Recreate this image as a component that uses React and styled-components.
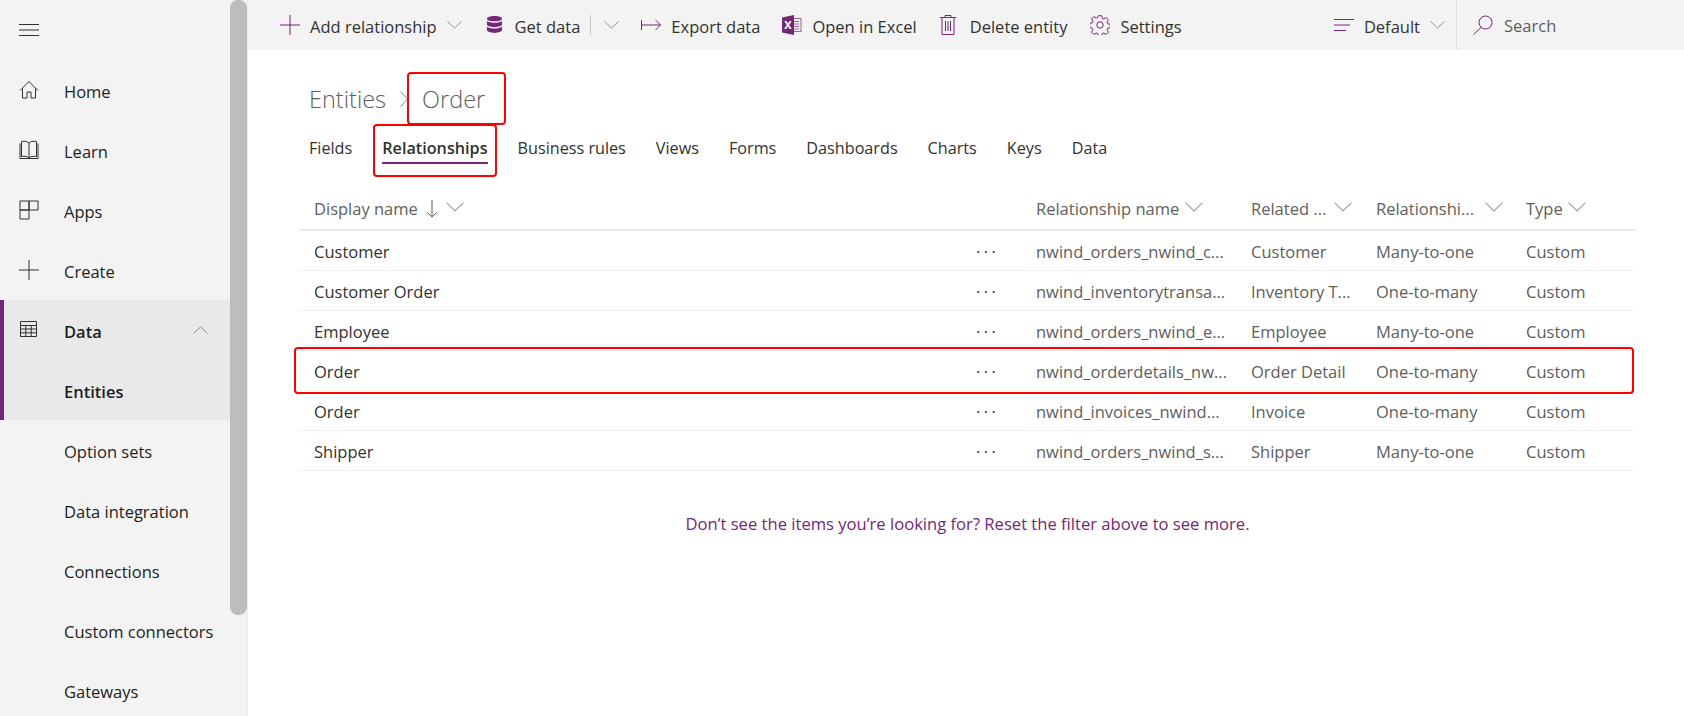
import React from "react";
import styled, { createGlobalStyle } from "styled-components";

const PURPLE = "#742774";
const FONT = `"Open Sans", "Noto Sans", "Liberation Sans", sans-serif`;

const GlobalStyle = createGlobalStyle`
  html, body {
    margin: 0;
    padding: 0;
    height: 100%;
    overflow: hidden;
    background: #fff;
    font-family: ${FONT};
  }
`;

const Chevron = ({ up }) => (
  <ChevronSvg viewBox="0 0 16 9" preserveAspectRatio="none">
    <path d={up ? "M.5 8.500 8 1l7.500 7.500" : "M.5.5 8 8 15.500.5"} />
  </ChevronSvg>
);

const navIcons = {
  home: <path d="M1 10.500 10 1.500l9 9M3.500 8.500v9.500h4.500v-6h4v6h4.500V8.500" />,
  learn: <path d="M1 3.500v15h18v-15M2.500 16.500V1.500c3.500-.6 6 0 7.500 1.600 1.500-1.600 4-2.200 7.500-1.600v15c-3.500-.6-6 0-7.500 1.600-1.500-1.600-4-2.200-7.500-1.600ZM10 3v15" />,
  apps: <path d="M1 1h9v9H1zM1 10h9v9H1zM10 1h9v9h-9z" />,
  create: <path d="M0 10h20M10 0v20" />,
  data: <path d="M1.500 1.500h16v15h-16zM1.500 5.500h16M1.500 9h16M1.500 12.800h16M6.800 5.500v11M12.200 5.500v11" />,
};

const navItems = [
  { icon: "home", label: "Home" },
  { icon: "learn", label: "Learn" },
  { icon: "apps", label: "Apps" },
  { icon: "create", label: "Create" },
  { icon: "data", label: "Data", active: true, open: true },
  { label: "Entities", active: true },
  { label: "Option sets" },
  { label: "Data integration" },
  { label: "Connections" },
  { label: "Custom connectors" },
  { label: "Gateways" },
];

const rows = [
  ["Customer", "nwind_orders_nwind_c...", "Customer", "Many-to-one", "Custom"],
  ["Customer Order", "nwind_inventorytransa...", "Inventory T...", "One-to-many", "Custom"],
  ["Employee", "nwind_orders_nwind_e...", "Employee", "Many-to-one", "Custom"],
  ["Order", "nwind_orderdetails_nw...", "Order Detail", "One-to-many", "Custom"],
  ["Order", "nwind_invoices_nwind...", "Invoice", "One-to-many", "Custom"],
  ["Shipper", "nwind_orders_nwind_s...", "Shipper", "Many-to-one", "Custom"],
];

const tabs = ["Fields", "Relationships", "Business rules", "Views", "Forms", "Dashboards", "Charts", "Keys", "Data"];

const App = () => {
  return (
    <Page>
      <GlobalStyle />
      <Sidebar>
        <Hamburger>
          <NavSvg viewBox="0 0 20 12">
            <path d="M0 .5h20M0 6h20M0 11.500h20" />
          </NavSvg>
        </Hamburger>
        {navItems.map((item) => (
          <NavItem key={item.label} $active={item.active}>
            <NavIconBox>{item.icon && <NavSvg viewBox="0 0 20 20">{navIcons[item.icon]}</NavSvg>}</NavIconBox>
            <NavLabel>{item.label}</NavLabel>
            {item.open && (
              <NavChevron>
                <Chevron up />
              </NavChevron>
            )}
          </NavItem>
        ))}
        <Scrollbar />
      </Sidebar>

      <Main>
        <Toolbar>
          <ToolButton $left={32}>
            <ToolSvg viewBox="0 0 20 20">
              <path d="M0 10h20M10 0v20" />
            </ToolSvg>
            Add relationship
            <Chevron />
          </ToolButton>
          <ToolButton $left={25}>
            <ToolSvg viewBox="0 0 16 18" $w={15} $right={3}>
              <FilledPath d="M8 0c4.400 0 8 1.200 8 2.800s-3.600 2.800-8 2.800S0 4.400 0 2.800 3.600 0 8 0ZM0 5.400c1.500 1.200 4.500 1.900 8 1.900s6.500-.7 8-1.900V9c0 1.500-3.600 2.700-8 2.700S0 10.500 0 9ZM0 11.400c1.500 1.200 4.500 1.900 8 1.900s6.500-.7 8-1.900V15c0 1.600-3.600 3-8 3s-8-1.400-8-3Z" />
            </ToolSvg>
            Get data
            <ToolDivider />
            <Chevron />
          </ToolButton>
          <ToolButton $left={22}>
            <ToolSvg viewBox="0 0 20 12">
              <path d="M.5 1v10M.5 6h19M14.500 1l5 5-5 5" />
            </ToolSvg>
            Export data
          </ToolButton>
          <ToolButton $left={22}>
            <ToolSvg viewBox="0 0 20 20">
              <path d="M11 3.500h8v13h-8M12 6.500h5M12 9h5M12 11.500h5M12 14h5" strokeOpacity="0.7" />
              <FilledPath d="M0 2.500 12 0v20L0 17.500Z" />
              <ExcelMark x="6" y="13.500" textAnchor="middle">X</ExcelMark>
            </ToolSvg>
            Open in Excel
          </ToolButton>
          <ToolButton $left={23}>
            <ToolSvg viewBox="0 0 16 20" $w={16} $right={4}>
              <path d="M0 2.500h16M5 2.500V.5h6v2M2 2.500v17h12v-17M5.500 6v10M8 6v10M10.500 6v10" />
            </ToolSvg>
            Delete entity
          </ToolButton>
          <ToolButton $left={23}>
            <ToolSvg viewBox="0 0 20 20">
              <path d="M8.300 .7h3.400l.5 2.600 1.600.7 2.300-1.500 2.400 2.400-1.500 2.300.7 1.600 2.600.5v3.400l-2.600.5-.7 1.600 1.500 2.300-2.400 2.400-2.300-1.500-1.600.7-.5 2.600H8.300l-.5-2.600-1.600-.7-2.300 1.500-2.400-2.400 1.500-2.300-.7-1.600-2.600-.5V8.300l2.600-.5.7-1.600-1.500-2.300 2.400-2.400 2.300 1.500 1.600-.7Z" />
              <circle cx="10" cy="10" r="3.200" />
            </ToolSvg>
            Settings
          </ToolButton>
          <ToolSpacer />
          <ToolButton $left={0}>
            <ToolSvg viewBox="0 0 20 12">
              <path d="M0 .5h20M0 6h16M0 11.500h12" />
            </ToolSvg>
            Default
            <Chevron />
          </ToolButton>
          <SearchBox>
            <ToolSvg viewBox="0 0 20 20">
              <circle cx="12.500" cy="7.500" r="6.500" />
              <path d="M8 12.500.5 19.500" />
            </ToolSvg>
            Search
          </SearchBox>
        </Toolbar>

        <Content>
          <Breadcrumb>
            <Crumb>Entities</Crumb>
            <CrumbSeparator viewBox="0 0 8 16">
              <path d="M.5.5 7.500 8 .5 15.500" />
            </CrumbSeparator>
            <Crumb>
              Order
              <TitleHighlight />
            </Crumb>
          </Breadcrumb>

          <Tabs>
            {tabs.map((tab) => (
              <Tab key={tab} $active={tab === "Relationships"}>
                {tab}
                {tab === "Relationships" && <TabHighlight />}
              </Tab>
            ))}
          </Tabs>

          <Table>
            <HeaderRow>
              <HeaderCell $gap={9}>
                Display name
                <SortArrow viewBox="0 0 10 18">
                  <path d="M5 0v17M.5 12.500 5 17l4.500-4.500" />
                </SortArrow>
                <Chevron />
              </HeaderCell>
              <span />
              <HeaderCell $gap={6}>
                Relationship name
                <Chevron />
              </HeaderCell>
              <HeaderCell $gap={8}>
                Related ...
                <Chevron />
              </HeaderCell>
              <HeaderCell $gap={11}>
                Relationshi...
                <Chevron />
              </HeaderCell>
              <HeaderCell $gap={5}>
                Type
                <Chevron />
              </HeaderCell>
            </HeaderRow>
            {rows.map((row) => (
              <Row key={row[1]}>
                <NameCell>{row[0]}</NameCell>
                <Dots>···</Dots>
                {row.slice(1).map((value, i) => (
                  <Cell key={i}>{value}</Cell>
                ))}
                {row[1].startsWith("nwind_orderdetails") && <RowHighlight />}
              </Row>
            ))}
          </Table>

          <FilterHint>Don’t see the items you’re looking for? Reset the filter above to see more.</FilterHint>
        </Content>
      </Main>
    </Page>
  );
};

export default App;

const Page = styled.div`
  display: flex;
  width: 1684px;
  height: 716px;
  overflow: hidden;
  font-size: 16.5px;
  color: #323130;
`;

const Sidebar = styled.nav`
  position: relative;
  flex: 0 0 248px;
  height: 100%;
  background: #f3f3f3;
  border-right: 1px solid #ececec;
  box-sizing: border-box;
  overflow: hidden;
`;

const Hamburger = styled.div`
  display: flex;
  align-items: center;
  height: 60px;
  padding-left: 19px;
`;

const NavItem = styled.div`
  display: flex;
  align-items: center;
  height: 60px;
  box-sizing: border-box;
  padding-left: ${(p) => (p.$active ? 15 : 19)}px;
  border-left: ${(p) => (p.$active ? `4px solid ${PURPLE}` : "none")};
  background: ${(p) => (p.$active ? "#e9e9e9" : "transparent")};
  font-weight: ${(p) => (p.$active ? 600 : 400)};
  color: #201f1e;
`;

const NavIconBox = styled.span`
  display: flex;
  flex: 0 0 20px;
  margin-right: 25px;
`;

const NavSvg = styled.svg`
  width: 20px;
  fill: none;
  stroke: #323130;
  stroke-width: 1;
`;

const NavLabel = styled.span`
  padding-top: 3px;
  white-space: nowrap;
`;

const NavChevron = styled.span`
  display: flex;
  margin-left: auto;
  margin-right: 39px;
`;

const ChevronSvg = styled.svg`
  flex: none;
  width: 15px;
  height: 8px;
  fill: none;
  stroke: #8a8886;
  stroke-width: 1;
`;

const Scrollbar = styled.div`
  position: absolute;
  top: 0;
  right: 0;
  width: 17px;
  height: 615px;
  background: #bdbdbd;
  border-radius: 8px;
`;

const Main = styled.main`
  flex: 1;
  min-width: 0;
`;

const Toolbar = styled.div`
  display: flex;
  align-items: center;
  height: 50px;
  background: #f3f3f3;
`;

const ToolButton = styled.div`
  display: flex;
  align-items: center;
  gap: 10px;
  margin-left: ${(p) => p.$left}px;
  white-space: nowrap;
  padding-top: 2px;
  & > svg {
    margin-top: -3px;
  }
`;

const ToolSvg = styled.svg`
  flex: none;
  width: ${(p) => p.$w || 20}px;
  margin-right: ${(p) => p.$right || 0}px;
  fill: none;
  stroke: ${PURPLE};
  stroke-width: 1;
`;

const FilledPath = styled.path`
  fill: ${PURPLE};
  stroke: none;
`;

const ExcelMark = styled.text`
  fill: #fff;
  stroke: none;
  font-size: 11px;
  font-weight: 700;
  font-family: ${FONT};
`;

const ToolDivider = styled.span`
  width: 1px;
  height: 20px;
  background: #c8c6c4;
  margin: -3px 3px 0 0;
`;

const ToolSpacer = styled.span`
  flex: 1;
`;

const SearchBox = styled.div`
  display: flex;
  align-items: center;
  gap: 11px;
  align-self: stretch;
  width: 228px;
  box-sizing: border-box;
  margin-left: 11px;
  padding-left: 16px;
  border-left: 1px solid #e1e1e1;
  color: #605e5c;
`;

const Content = styled.div`
  padding-left: 51px;
`;

const Breadcrumb = styled.div`
  display: flex;
  align-items: center;
  gap: 14px;
  height: 74px;
  padding: 24px 0 0 10px;
  box-sizing: border-box;
  font-size: 23.5px;
`;

const Crumb = styled.span`
  position: relative;
  font-weight: 300;
  color: #605e5c;
`;

const CrumbSeparator = styled.svg`
  width: 8px;
  height: 16px;
  fill: none;
  stroke: #8a8886;
`;

const Annotation = styled.div`
  position: absolute;
  border: 2px solid #f00;
  border-radius: 4px;
  box-sizing: border-box;
  pointer-events: none;
`;

const TitleHighlight = styled(Annotation)`
  left: -15px;
  top: -11px;
  width: 99px;
  height: 53px;
`;

const Tabs = styled.div`
  display: flex;
  gap: 30px;
  padding-left: 10px;
  height: 56px;
  font-size: 16.2px;
`;

const Tab = styled.div`
  position: relative;
  height: 38px;
  line-height: 48px;
  font-weight: ${(p) => (p.$active ? 600 : 400)};
  border-bottom: 2px solid ${(p) => (p.$active ? PURPLE : "transparent")};
`;

const TabHighlight = styled(Annotation)`
  left: -9px;
  top: 0;
  width: 124px;
  height: 53px;
`;

const Table = styled.div`
  width: 1337px;
`;

const columns = "677px 60px 215px 125px 150px 110px";

const HeaderRow = styled.div`
  display: grid;
  grid-template-columns: ${columns};
  align-items: center;
  height: 51px;
  padding-top: 8px;
  box-sizing: border-box;
  border-bottom: 2px solid #edebe9;
  color: #605e5c;
`;

const HeaderCell = styled.div`
  display: flex;
  align-items: center;
  gap: ${(p) => p.$gap}px;
  white-space: nowrap;
  &:first-child {
    padding-left: 15px;
  }
  & > svg:last-child {
    width: 18px;
    height: 10px;
    stroke: #a19f9d;
    margin-top: -3px;
  }
`;

const SortArrow = styled.svg`
  width: 10px;
  height: 18px;
  fill: none;
  stroke: #605e5c;
`;

const Row = styled.div`
  position: relative;
  display: grid;
  grid-template-columns: ${columns};
  align-items: center;
  height: 40px;
  padding-top: 1px;
  box-sizing: border-box;
  border-bottom: 1px solid #f3f2f1;
  color: #605e5c;
`;

const NameCell = styled.div`
  padding-left: 15px;
  color: #323130;
`;

const Cell = styled.div`
  white-space: nowrap;
`;

const Dots = styled.div`
  font-size: 16px;
  line-height: 1;
  color: #323130;
  letter-spacing: 3.5px;
  margin-top: 2px;
`;

const RowHighlight = styled(Annotation)`
  left: -5px;
  right: 2px;
  top: -4px;
  bottom: -4px;
`;

const FilterHint = styled.div`
  width: 1337px;
  margin-top: 41px;
  text-align: center;
  font-size: 16.6px;
  color: ${PURPLE};
`;
